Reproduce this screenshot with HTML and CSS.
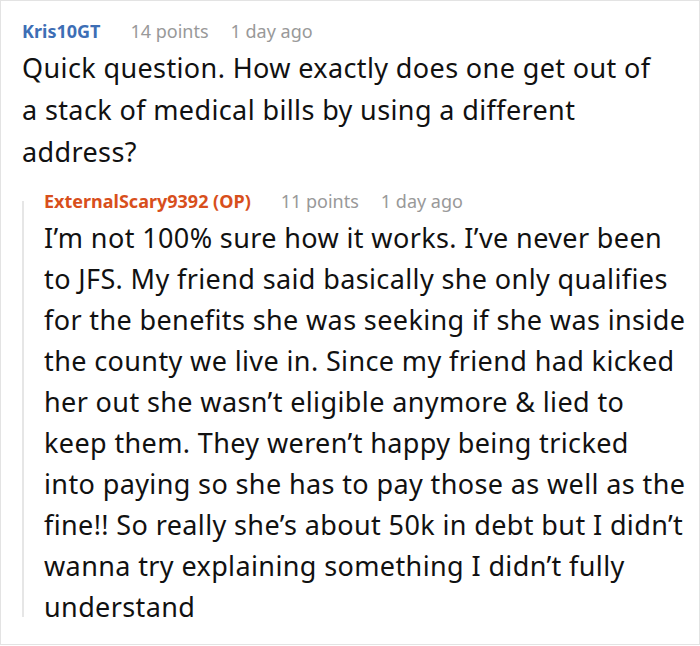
FILE: index.html
```html
<!DOCTYPE html>
<html>
<head>
<meta charset="utf-8">
<link rel="stylesheet" href="styles.css">
</head>
<body>
<div class="card">
  <div class="comment">
    <div class="meta">
      <span class="user user-blue">Kris10GT</span>
      <span class="info">14 points</span>
      <span class="info">1 day ago</span>
    </div>
    <p class="body body-top">Quick question. How exactly does one get out of a stack of medical bills by using a different address?</p>
    <div class="replies">
      <div class="comment">
        <div class="meta">
          <span class="user user-op">ExternalScary9392 (OP)</span>
          <span class="info">11 points</span>
          <span class="info">1 day ago</span>
        </div>
        <p class="body body-reply">I’m not 100% sure how it works. I’ve never been to JFS. My friend said basically she only qualifies for the benefits she was seeking if she was inside the county we live in. Since my friend had kicked her out she wasn’t eligible anymore &amp; lied to keep them. They weren’t happy being tricked into paying so she has to pay those as well as the fine!! So really she’s about 50k in debt but I didn’t wanna try explaining something I didn’t fully understand</p>
      </div>
    </div>
  </div>
</div>
</body>
</html>
```
FILE: styles.css
```css
html, body {
  margin: 0;
  padding: 0;
  background: #fff;
}
.card {
  box-sizing: border-box;
  width: 700px;
  height: 645px;
  border: 1px solid #e3e3e3;
  padding: 17px 12px 0 21px;
  font-family: "Noto Sans", sans-serif;
  color: #111;
}
.meta {
  display: flex;
  gap: 22px;
  font-size: 18px;
  line-height: 26px;
  margin-bottom: 3px;
}
.user {
  font-weight: 700;
  margin-right: 8px;
}
.user-blue { color: #3d6eb5; }
.user-op { color: #d84f1c; }
.info { color: #999; }
.body {
  margin: 0;
  font-size: 27px;
  line-height: 42px;
  letter-spacing: 0.38px;
}
.body-top {
  padding-right: 27px;
}
.body-reply {
  line-height: 41px;
}
.replies {
  position: relative;
  margin-top: 15px;
  padding-left: 22px;
}
.replies::before {
  content: "";
  position: absolute;
  left: 0;
  top: 13px;
  bottom: 10px;
  width: 2px;
  background: #e6e6e6;
}
```
